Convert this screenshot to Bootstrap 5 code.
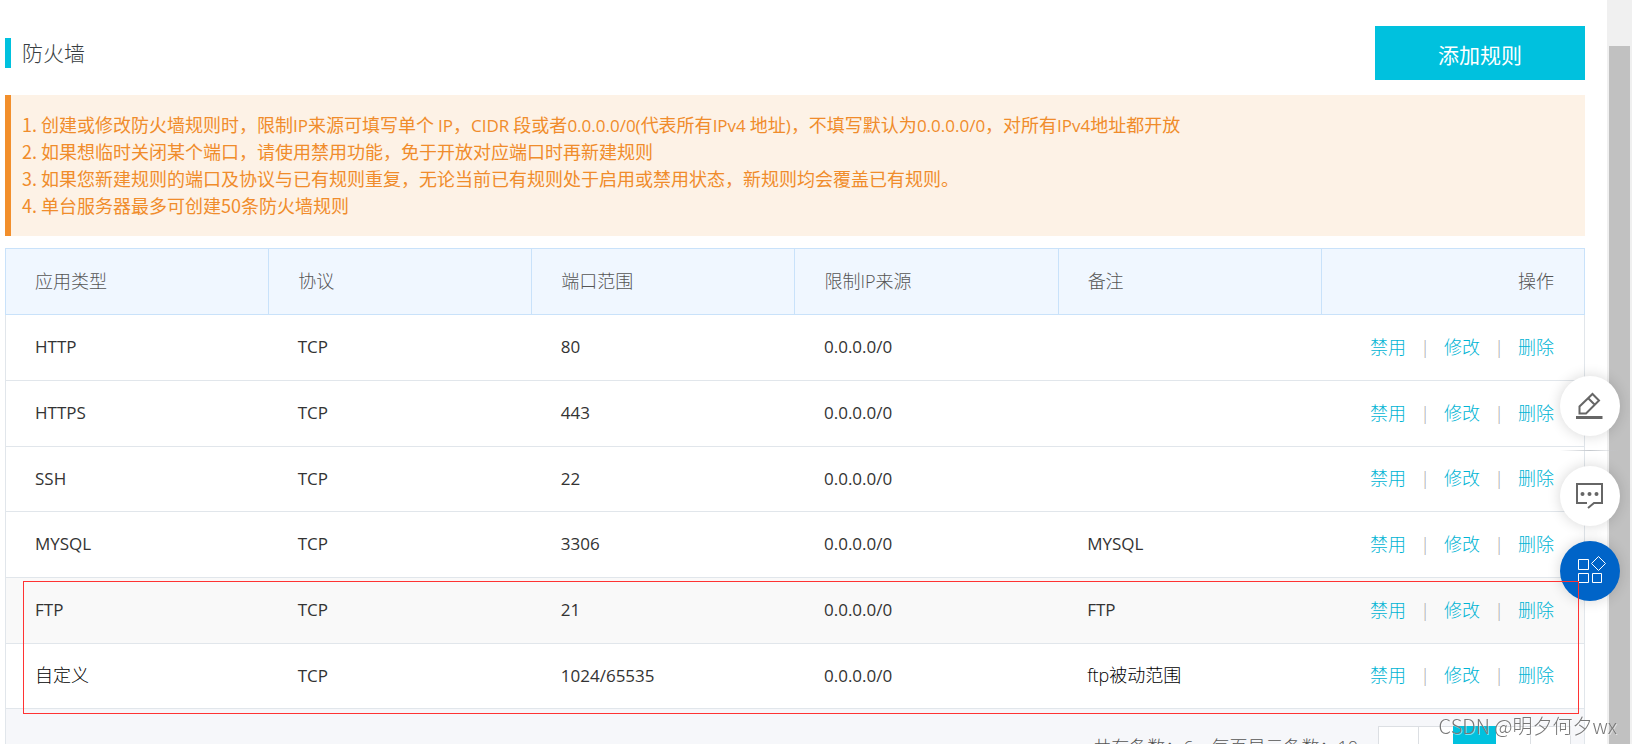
<!DOCTYPE html>
<html lang="zh-CN">
<head>
<meta charset="utf-8">
<meta name="viewport" content="width=device-width, initial-scale=1">
<title>防火墙</title>
<link href="https://cdn.jsdelivr.net/npm/bootstrap@5.3.0/dist/css/bootstrap.min.css" rel="stylesheet">
<style>
  body { font-family: "Open Sans", "Noto Sans CJK SC", sans-serif; font-size: 18px; font-weight: 300; color: #333; background: #fff; }
  .shell { height: 100vh; overflow: hidden; }
  .page-main { padding: 26px 22px 0 5px; min-width: 0; }
  .title-bar { border-left: 6px solid #00c1de; padding-left: 11px; font-size: 21px; line-height: 30px; font-weight: 300; color: #373d41; }
  .btn-add { --bs-btn-color: #fff; --bs-btn-bg: #00c1de; --bs-btn-hover-color: #fff; --bs-btn-hover-bg: #00a9c4; --bs-btn-border-width: 0; width: 210px; height: 54px; padding: 4px 0 0; font-size: 21px; line-height: 30px; }
  .notice { margin-top: 15px; padding: 16px 11px 17px; border-left: 6px solid #f28f2c; background: #fdf2e6; color: #f08c2b; line-height: 27px; font-family: "Noto Sans CJK SC", sans-serif; font-weight: 400; }
  .notice .latin { font-family: "Open Sans", sans-serif; font-size: 17px; line-height: 1; }
  .rules { --bs-table-color: #333; table-layout: fixed; margin: 12px 0 0; border: 1px solid #e1e6eb; }
  .rules th { height: 66px; padding: 0 30px 0 29px; border: 1px solid #c9e2fa; background: #f0f7ff; color: #555; font-weight: 300; vertical-align: middle; }
  .rules td { height: 66px; padding: 0 30px 1px 29px; border-bottom: 1px solid #e1e6eb; font-size: 17px; font-weight: 400; }
  .rules tbody tr:nth-child(3n) td { height: 65px; }
  .rules .zh, .rules .ops { font-size: 18px; font-weight: 300; }
  .rules .zh { color: #000; }
  .rules tr.active-row td { background: #f9f9f9; }
  .ops a { color: #00b4d4; text-decoration: none; }
  .ops span { color: #aaa; display: inline-block; width: 38px; text-align: center; }
  .table-foot { background: #f6f7fa; border: 1px solid #e1e6eb; border-top: 0; height: 66px; padding: 17px 13px 0 0; color: #555; }
  .foot-note { padding-top: 8px; margin-right: 20px; }
  .pager { --bs-pagination-border-color: #dcdfe3; --bs-pagination-border-radius: 0; }
  .pager .page-link { width: 41px; height: 41px; }
  .pager .step .page-link { width: 36px; }
  .pager .active .page-link { width: 43px; background: #00c1de; border-color: #00c1de; }
  .scroll-track { width: 25px; padding: 46px 2px 0; background: #f0f0f0; }
  .scroll-thumb { background: #c1c1c1; }
  .float-tools { position: fixed; right: 12px; top: 376px; width: 60px; }
  .tool-btn { width: 60px; height: 60px; border: 0; border-radius: 50%; background: #fff; box-shadow: 0 0 14px rgba(0,0,0,.16); padding: 0; }
  .tool-btn.blue { background: #0064c8; margin-top: 15px; }
  .tool-line { height: 1px; margin: 14px 0 15px; background: linear-gradient(90deg, transparent, #c5c9ce, transparent); }
  .marker { position: absolute; left: 23px; right: 53px; top: 581px; height: 133px; border: 1px solid #ff3333; pointer-events: none; z-index: 5; }
  .watermark { position: fixed; right: 15px; bottom: 4px; font-family: "Noto Sans CJK SC", sans-serif; font-size: 20px; line-height: 28px; color: #777; text-shadow: 1px 1px 0 rgba(255,255,255,.5); z-index: 6; }
</style>
</head>
<body>
<div class="shell d-flex">
  <main class="page-main flex-grow-1">
    <header class="d-flex justify-content-between align-items-center">
      <h1 class="title-bar m-0">防火墙</h1>
      <button type="button" class="btn btn-add rounded-0">添加规则</button>
    </header>
    <div class="notice">
      <div>1. 创建或修改防火墙规则时，限制<span class="latin">IP</span>来源可填写单个 <span class="latin">IP</span>，<span class="latin">CIDR</span> 段或者<span class="latin">0.0.0.0/0(</span>代表所有<span class="latin">IPv4</span> 地址<span class="latin">)</span>，不填写默认为<span class="latin">0.0.0.0/0</span>，对所有<span class="latin">IPv4</span>地址都开放</div>
      <div>2. 如果想临时关闭某个端口，请使用禁用功能，免于开放对应端口时再新建规则</div>
      <div>3. 如果您新建规则的端口及协议与已有规则重复，无论当前已有规则处于启用或禁用状态，新规则均会覆盖已有规则。</div>
      <div>4. 单台服务器最多可创建50条防火墙规则</div>
    </div>
    <table class="table rules align-middle">
      <thead><tr><th>应用类型</th><th>协议</th><th>端口范围</th><th>限制IP来源</th><th>备注</th><th class="text-end">操作</th></tr></thead>
      <tbody>
        <tr><td>HTTP</td><td>TCP</td><td>80</td><td>0.0.0.0/0</td><td></td><td class="ops text-end text-nowrap"><a href="#">禁用</a><span>|</span><a href="#">修改</a><span>|</span><a href="#">删除</a></td></tr>
        <tr><td>HTTPS</td><td>TCP</td><td>443</td><td>0.0.0.0/0</td><td></td><td class="ops text-end text-nowrap"><a href="#">禁用</a><span>|</span><a href="#">修改</a><span>|</span><a href="#">删除</a></td></tr>
        <tr><td>SSH</td><td>TCP</td><td>22</td><td>0.0.0.0/0</td><td></td><td class="ops text-end text-nowrap"><a href="#">禁用</a><span>|</span><a href="#">修改</a><span>|</span><a href="#">删除</a></td></tr>
        <tr><td>MYSQL</td><td>TCP</td><td>3306</td><td>0.0.0.0/0</td><td>MYSQL</td><td class="ops text-end text-nowrap"><a href="#">禁用</a><span>|</span><a href="#">修改</a><span>|</span><a href="#">删除</a></td></tr>
        <tr class="active-row"><td>FTP</td><td>TCP</td><td>21</td><td>0.0.0.0/0</td><td>FTP</td><td class="ops text-end text-nowrap"><a href="#">禁用</a><span>|</span><a href="#">修改</a><span>|</span><a href="#">删除</a></td></tr>
        <tr><td class="zh">自定义</td><td>TCP</td><td>1024/65535</td><td>0.0.0.0/0</td><td class="zh">ftp被动范围</td><td class="ops text-end text-nowrap"><a href="#">禁用</a><span>|</span><a href="#">修改</a><span>|</span><a href="#">删除</a></td></tr>
      </tbody>
    </table>
    <footer class="table-foot d-flex justify-content-end">
      <div class="foot-note">共有条数：6，每页显示条数：10</div>
      <ul class="pagination pager m-0">
        <li class="page-item"><a class="page-link" href="#" aria-label="首页"></a></li>
        <li class="page-item step"><a class="page-link" href="#" aria-label="上一页"></a></li>
        <li class="page-item active"><a class="page-link" href="#" aria-label="当前页"></a></li>
        <li class="page-item step"><a class="page-link" href="#" aria-label="下一页"></a></li>
        <li class="page-item"><a class="page-link" href="#" aria-label="末页"></a></li>
      </ul>
    </footer>
  </main>
  <div class="scroll-track d-flex flex-shrink-0"><div class="scroll-thumb flex-grow-1"></div></div>
</div>
<div class="float-tools">
  <button type="button" class="tool-btn d-block" aria-label="编辑"><svg class="d-block" width="60" height="60" fill="none" stroke="#666" stroke-width="2"><path d="M19.500 37.500V30.500L32.500 18L39 24.500L26 37.500ZM28 22L35 29"/><path d="M16 41.500H42.500" stroke-width="3"/></svg></button>
  <div class="tool-line"></div>
  <button type="button" class="tool-btn d-block" aria-label="反馈"><svg class="d-block" width="60" height="60" fill="none" stroke="#666" stroke-width="2"><path d="M27 37H17V18H42V37H34L28 42"/><g fill="#666" stroke="none"><circle cx="22.500" cy="28" r="2"/><circle cx="29.500" cy="28" r="2"/><circle cx="36.500" cy="28" r="2"/></g></svg></button>
  <button type="button" class="tool-btn blue d-block" aria-label="应用"><svg class="d-block" width="60" height="60" fill="none" stroke="#fff"><path d="M18.500 18.500H28.500V28.500H18.500ZM18.500 32.500H28.500V41.500H18.500ZM32.500 32.500H41.500V41.500H32.500ZM38.500 15.500L45.500 22.500L38.500 29.500L31.500 22.500Z"/></svg></button>
</div>
<div class="marker"></div>
<div class="watermark">CSDN @明夕何夕wx</div>
<script src="https://cdn.jsdelivr.net/npm/bootstrap@5.3.0/dist/js/bootstrap.bundle.min.js"></script>
</body>
</html>
